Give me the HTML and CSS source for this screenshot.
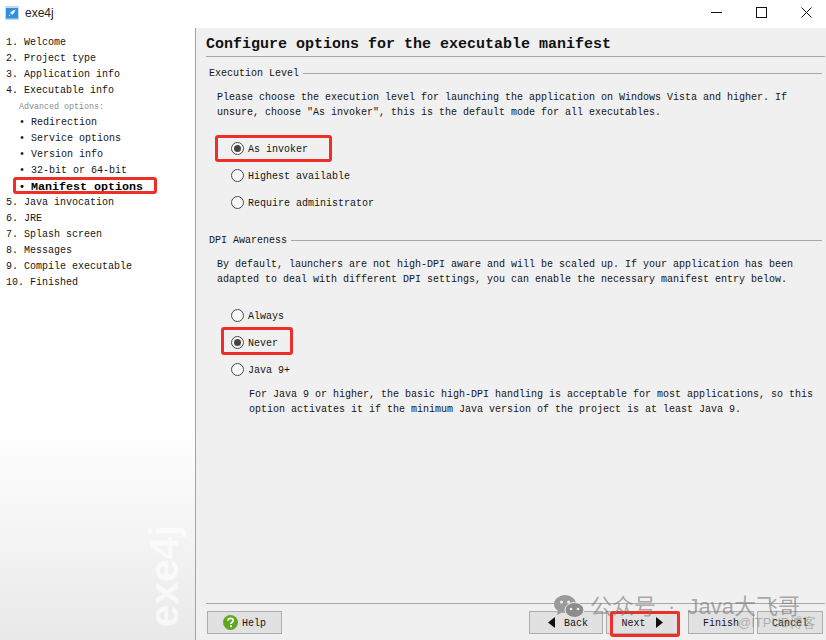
FILE: index.html
```html
<!DOCTYPE html>
<html lang="en">
<head>
<meta charset="utf-8">
<title>exe4j</title>
<link rel="stylesheet" href="styles.css">
</head>
<body>
<div class="window">
  <header class="titlebar">
    <svg class="app-icon" width="14" height="14" viewBox="0 0 14 14"><rect width="14" height="14" fill="#c4d8ea"/><rect x="1" y="2" width="12" height="10.5" fill="#2f8fe0"/><path d="M10.5 3.5 L7 5 L5 7 L6.4 7.6 L7 9 L9 7Z" fill="#fff"/><path d="M5.2 8.8 L4 10" stroke="#fff"/></svg>
    <span class="app-name">exe4j</span>
    <div class="controls">
      <svg width="11" height="11" viewBox="0 0 11 11"><path d="M0 5.5H11" stroke="#111" fill="none"/></svg>
      <svg width="11" height="11" viewBox="0 0 11 11"><rect x="0.5" y="0.5" width="10" height="10" stroke="#111" fill="none"/></svg>
      <svg width="11" height="11" viewBox="0 0 11 11"><path d="M0.5 0.5L10.5 10.5M10.5 0.5L0.5 10.5" stroke="#111" fill="none"/></svg>
    </div>
  </header>
  <div class="body">
    <nav class="sidebar">
      <div class="step">1. Welcome</div>
      <div class="step">2. Project type</div>
      <div class="step">3. Application info</div>
      <div class="step">4. Executable info</div>
      <div class="advanced">Advanced options:</div>
      <div class="step sub">• Redirection</div>
      <div class="step sub">• Service options</div>
      <div class="step sub">• Version info</div>
      <div class="step sub">• 32-bit or 64-bit</div>
      <div class="step sub current">• <span class="current-text">Manifest options</span></div>
      <div class="step">5. Java invocation</div>
      <div class="step">6. JRE</div>
      <div class="step">7. Splash screen</div>
      <div class="step">8. Messages</div>
      <div class="step">9. Compile executable</div>
      <div class="step">10. Finished</div>
      <div class="brand">exe4j</div>
    </nav>
    <main class="content">
      <h1 class="heading">Configure options for the executable manifest</h1>
      <section class="group">
        <div class="legend"><span class="label">Execution Level</span></div>
        <p class="para">Please choose the execution level for launching the application on Windows Vista and higher. If<br>unsure, choose "As invoker", this is the default mode for all executables.</p>
        <div class="radios">
          <div class="radio checked"><span class="dot"></span><span class="label">As invoker</span></div>
          <div class="radio"><span class="dot"></span><span class="label">Highest available</span></div>
          <div class="radio"><span class="dot"></span><span class="label">Require administrator</span></div>
        </div>
      </section>
      <section class="group">
        <div class="legend"><span class="label">DPI Awareness</span></div>
        <p class="para">By default, launchers are not high-DPI aware and will be scaled up. If your application has been<br>adapted to deal with different DPI settings, you can enable the necessary manifest entry below.</p>
        <div class="radios">
          <div class="radio"><span class="dot"></span><span class="label">Always</span></div>
          <div class="radio checked"><span class="dot"></span><span class="label">Never</span></div>
          <div class="radio"><span class="dot"></span><span class="label">Java 9+</span></div>
        </div>
        <p class="note">For Java 9 or higher, the basic high-DPI handling is acceptable for most applications, so this<br>option activates it if the minimum Java version of the project is at least Java 9.</p>
      </section>
      <footer class="footer">
        <button class="btn help"><svg width="15" height="15" viewBox="0 0 15 15"><circle cx="7.5" cy="7.5" r="7.5" fill="#5fa81e"/><path d="M5 5.8C5 4.2 6.2 3.4 7.6 3.4C9.1 3.4 10.2 4.3 10.2 5.6C10.2 7.3 8 7.3 8 9" fill="none" stroke="#fff" stroke-width="1.8"/><rect x="7" y="10.2" width="2" height="2" fill="#fff"/></svg><span class="label">Help</span></button>
        <span class="spacer"></span>
        <button class="btn nav back"><svg width="7" height="11" viewBox="0 0 7 11"><path d="M7 0V11L0 5.5Z" fill="#111"/></svg><span class="label">Back</span></button>
        <button class="btn nav next"><span class="label">Next</span><svg width="7" height="11" viewBox="0 0 7 11"><path d="M0 0V11L7 5.5Z" fill="#111"/></svg></button>
        <button class="btn end finish"><span class="label">Finish</span></button>
        <button class="btn end"><span class="label">Cancel</span></button>
      </footer>
    </main>
  </div>
  <div class="mark mark-manifest"></div>
  <div class="mark mark-invoker"></div>
  <div class="mark mark-never"></div>
  <div class="mark mark-next"></div>
  <div class="watermark">
    <svg width="30" height="24" viewBox="0 0 30 24"><ellipse cx="11" cy="9" rx="11" ry="9" fill="#9a9a9a"/><path d="M4 15L3 20L9 17Z" fill="#9a9a9a"/><ellipse cx="20.5" cy="15" rx="9.5" ry="7.5" fill="#8c8c8c" stroke="#f0f0f0"/><circle cx="7.5" cy="7" r="1.5" fill="#f0f0f0"/><circle cx="14.5" cy="7" r="1.5" fill="#f0f0f0"/><circle cx="17" cy="14" r="1.3" fill="#f0f0f0"/><circle cx="24" cy="14" r="1.3" fill="#f0f0f0"/></svg>
    <span class="wm-text">公众号 · Java大飞哥</span>
  </div>
  <div class="credit">@ITPUB博客</div>
</div>
</body>
</html>
```

FILE: styles.css
```css
* { box-sizing: border-box; }
html, body { margin: 0; padding: 0; }
body { background: #fff; font-family: "Liberation Mono", "Noto Sans CJK SC", monospace; font-size: 10px; color: #151515; }
.window { position: relative; width: 826px; height: 640px; display: flex; flex-direction: column; overflow: hidden; }
.titlebar { height: 28px; display: flex; align-items: center; padding-left: 5px; background: #fff; flex: none; }
.app-icon { flex: none; margin-top: -3px; }
.app-name { margin-left: 6px; margin-top: -3px; font: 12px "Liberation Sans", sans-serif; color: #222; }
.controls { margin-left: auto; display: flex; gap: 34px; padding-right: 14px; margin-top: -4px; }
.body { flex: 1; display: flex; min-height: 0; }
.sidebar { position: relative; width: 196px; flex: none; padding: 7px 0 0 6px; border-right: 1px solid #a4a4a4; background: linear-gradient(#fff 0, #fff 400px, #e9e9e9 612px); }
.step { height: 16px; line-height: 16px; white-space: pre; }
.sub { padding-left: 13px; }
.current { font-weight: 700; color: #000; }
.current-text { font-size: 11.67px; }
.advanced { height: 16px; line-height: 16px; padding-left: 13px; font-size: 8.33px; color: #8a8a8a; }
.brand { position: absolute; left: 145px; bottom: 12px; writing-mode: vertical-rl; transform: rotate(180deg); font: 700 41px/39px "Liberation Sans", sans-serif; color: #fff; opacity: .65; }
.content { flex: 1; display: flex; flex-direction: column; background: #f0f0f0; padding: 0 1px 0 10px; min-width: 0; }
.heading { margin: 0; height: 29px; line-height: 33px; font-size: 15px; font-weight: 700; color: #111; border-bottom: 1px solid #a8a8a8; flex: none; }
.group { padding-left: 3px; padding-right: 3px; }
.label { margin-top: 2px; }
.legend { margin-top: 8px; height: 16px; line-height: 16px; display: flex; align-items: center; gap: 4px; }
.group + .group .legend { margin-top: 16px; }
.legend::after { content: ""; flex: 1; height: 1px; background: #a8a8a8; }
.para { margin: 9px 0 0 8px; line-height: 15px; white-space: nowrap; }
.radios { margin: 15px 0 0 22px; }
.radio { height: 27px; display: flex; align-items: center; gap: 4px; }
.dot { width: 13px; height: 13px; border: 1px solid #4a4a4a; border-radius: 50%; background: #f8f8f8; display: flex; align-items: center; justify-content: center; flex: none; }
.checked .dot::after { content: ""; width: 7px; height: 7px; border-radius: 50%; background: #444; }
.note { margin: 4px 0 0 40px; line-height: 15px; white-space: nowrap; }
.footer { margin-top: auto; border-top: 1px solid #a8a8a8; padding: 7px 2px 6px 1px; display: flex; flex: none; }
.spacer { flex: 1; }
.btn { height: 23px; padding: 0; border: 1px solid #adadad; background: #e1e1e1; font: inherit; color: inherit; display: flex; align-items: center; justify-content: center; gap: 10px; }
.help { width: 75px; gap: 4px; }
.nav { width: 74px; margin-left: 3px; }
.back { gap: 9px; padding-left: 4px; }
.next { padding-right: 2px; }
.end { width: 66px; margin-left: 3px; }
.finish { margin-left: 8px; }
.mark { position: absolute; border: 3px solid #ee2f27; border-radius: 3px; }
.mark-manifest { left: 13px; top: 177px; width: 144px; height: 17px; }
.mark-invoker { left: 215px; top: 135px; width: 117px; height: 27px; }
.mark-never { left: 221px; top: 327px; width: 72px; height: 28px; }
.mark-next { left: 610px; top: 611px; width: 70px; height: 26px; }
.watermark { position: absolute; left: 554px; top: 594px; display: flex; align-items: center; gap: 6px; font: 22px/26px "Liberation Sans", "Noto Sans CJK SC", sans-serif; color: rgba(120,120,120,.62); white-space: nowrap; }
.wm-text { word-spacing: 6px; }
.credit { position: absolute; left: 738px; top: 615px; font: 13px/16px "Liberation Sans", "Noto Sans CJK SC", sans-serif; color: rgba(130,130,130,.55); white-space: nowrap; }
```
